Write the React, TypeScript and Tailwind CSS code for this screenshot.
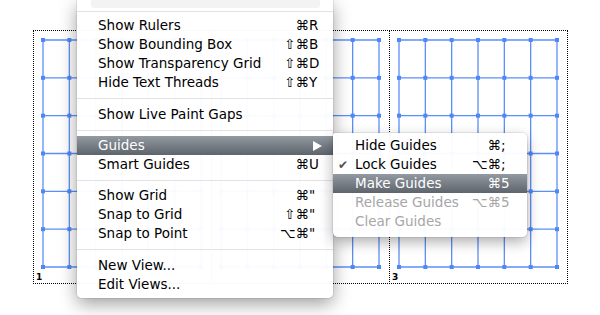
import React from 'react';

type RowProps = {
  label: string;
  mods?: string;
  keyChar?: string;
  active?: boolean;
  disabled?: boolean;
  check?: boolean;
  arrow?: boolean;
  sub?: boolean;
};

// grid positions inside an artboard (outer box coords)
const XS = Array.from({ length: 7 }, (_, i) => 10 + (i * 158) / 6);
const YS = Array.from({ length: 7 }, (_, i) => 10 + (i * 227) / 6);

function Artboard({ className, label }: { className: string; label?: string }) {
  return (
    <div className={`absolute top-[30px] h-[254px] w-[179px] border border-dotted border-black ${className}`}>
      <svg className="absolute -left-px -top-px" width="179" height="254">
        {XS.map((x) => (
          <line key={`v${x}`} x1={x} x2={x} y1={YS[0]} y2={YS[6]} stroke="#5b8ef8" strokeWidth="1.3" />
        ))}
        {YS.map((y) => (
          <line key={`h${y}`} x1={XS[0]} x2={XS[6]} y1={y} y2={y} stroke="#5b8ef8" strokeWidth="1.3" />
        ))}
        {XS.map((x) =>
          YS.map((y) => <rect key={`${x}-${y}`} x={x - 2} y={y - 2} width="4" height="4" fill="#4f87f7" />)
        )}
      </svg>
      {label && (
        <span className="absolute bottom-[1px] left-[2px] font-['DejaVu_Sans',sans-serif] text-[9px] leading-none font-bold text-black">
          {label}
        </span>
      )}
    </div>
  );
}

function Row({ label, mods = '', keyChar = '', active, disabled, check, arrow, sub }: RowProps) {
  const tone = active
    ? 'bg-linear-to-b from-[#939aa1] to-[#5d646c] text-white'
    : disabled
      ? 'text-[#a6a6a6]'
      : 'text-black';
  return (
    <div className={`flex h-[19px] items-center ${sub ? 'pl-[5px] pr-[16px]' : 'pl-[21px] pr-[15px]'} ${tone}`}>
      {sub && <span className="w-[17px] text-[12px] text-[#555]">{check ? '✔' : ''}</span>}
      <span className="flex-1 whitespace-nowrap">{label}</span>
      {arrow ? (
        <svg width="9" height="10" viewBox="0 0 9 10" className="mr-[-4px]">
          <path d="M0 0 L9 5 L0 10 Z" fill="#fff" />
        </svg>
      ) : (
        keyChar && (
          <span className="flex whitespace-nowrap">
            <span className="text-right">{mods}</span>
            <span className={sub ? 'w-[10px]' : 'w-[9px]'}>{keyChar}</span>
          </span>
        )
      )}
    </div>
  );
}

function Sep({ h }: { h: string }) {
  return (
    <div className={`flex items-center ${h}`}>
      <div className="h-px w-full bg-[#e2e2e2]" />
    </div>
  );
}

export default function App() {
  return (
    <div className="relative h-[315px] w-[600px] overflow-hidden bg-white font-['DejaVu_Sans',sans-serif] text-[13.5px]">
      {/* canvas */}
      <Artboard className="left-[33px]" label="1" />
      <Artboard className="left-[211px]" />
      <Artboard className="left-[389px]" label="3" />

      {/* View menu */}
      <div className="absolute left-[77px] top-0 w-[256px] rounded-b-[5px] bg-white/[0.96] pb-[4px] shadow-[0_0_0_1px_rgba(0,0,0,0.07),0_6px_18px_rgba(0,0,0,0.38)]">
        <div className="ml-[14px] mr-[13px] h-[8px] rounded-b-[3px] bg-[#f3f3f3]" />
        <div className="h-[8px] pt-[3px]">
          <div className="h-px w-full bg-[#e2e2e2]" />
        </div>
        <Row label="Show Rulers" mods="⌘" keyChar="R" />
        <Row label="Show Bounding Box" mods="⇧⌘" keyChar="B" />
        <Row label="Show Transparency Grid" mods="⇧⌘" keyChar="D" />
        <Row label="Hide Text Threads" mods="⇧⌘" keyChar="Y" />
        <Sep h="h-[13px]" />
        <Row label="Show Live Paint Gaps" />
        <Sep h="h-[12px]" />
        <Row label="Guides" active arrow />
        <Row label="Smart Guides" mods="⌘" keyChar="U" />
        <Sep h="h-[12px]" />
        <Row label="Show Grid" mods="⌘" keyChar={'"'} />
        <Row label="Snap to Grid" mods="⇧⌘" keyChar={'"'} />
        <Row label="Snap to Point" mods="⌥⌘" keyChar={'"'} />
        <Sep h="h-[13px]" />
        <Row label="New View..." />
        <Row label="Edit Views..." />
      </div>

      {/* Guides submenu */}
      <div className="absolute left-[333px] top-[133px] w-[194px] rounded-[5px] rounded-tl-[2px] bg-white/[0.96] pt-[3px] pb-[6px] shadow-[0_0_0_1px_rgba(0,0,0,0.07),0_5px_14px_rgba(0,0,0,0.32)]">
        <Row sub label="Hide Guides" mods="⌘" keyChar=";" />
        <Row sub check label="Lock Guides" mods="⌥⌘" keyChar=";" />
        <Row sub active label="Make Guides" mods="⌘" keyChar="5" />
        <Row sub disabled label="Release Guides" mods="⌥⌘" keyChar="5" />
        <Row sub disabled label="Clear Guides" />
      </div>
    </div>
  );
}
